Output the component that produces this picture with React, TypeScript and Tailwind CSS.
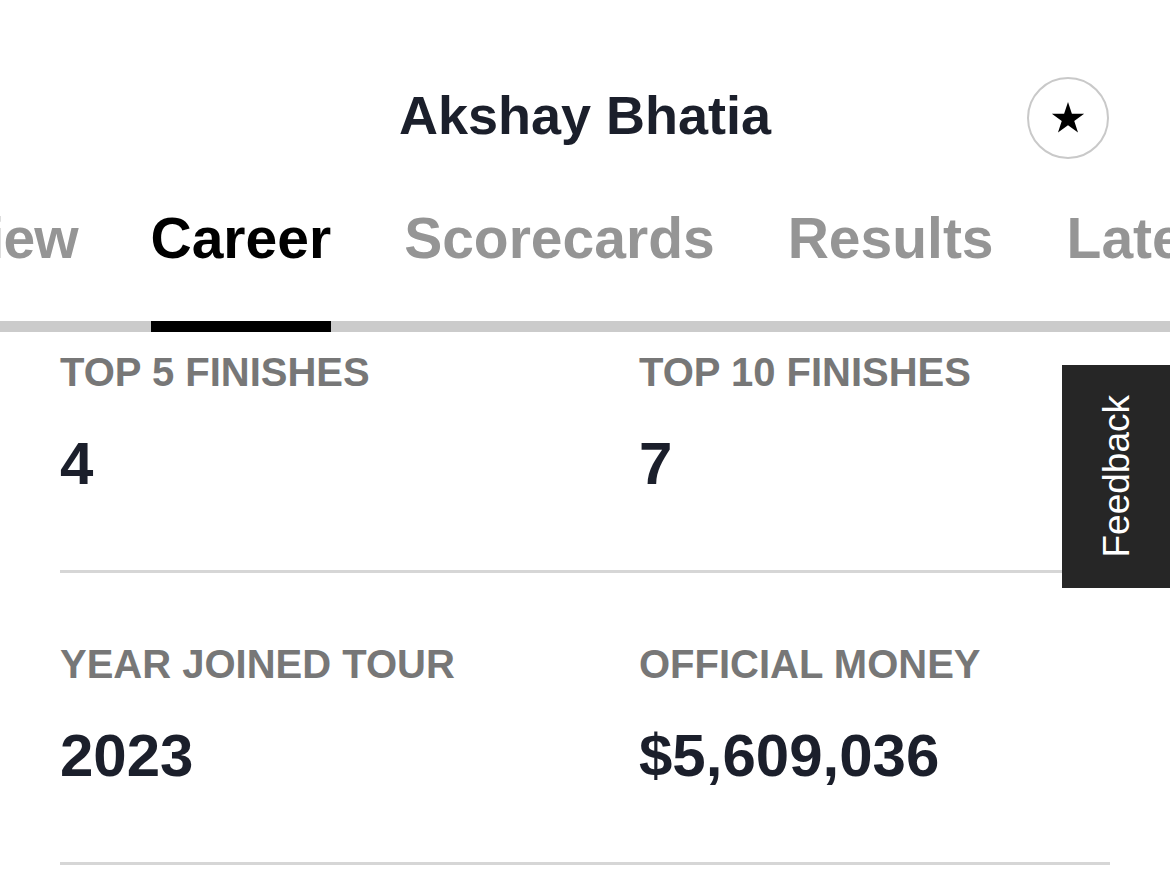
import React from "react";

const tabs = ["Overview", "Career", "Scorecards", "Results", "Latest"];

function Stat({ label, value }: { label: string; value: string }) {
  return (
    <div className="flex flex-col">
      <div className="text-[40px] leading-[48px] font-bold text-[#777777] whitespace-nowrap">
        {label}
      </div>
      <div className="mt-[32px] text-[60px] leading-[72px] font-bold text-[#1b1f2b] whitespace-nowrap">
        {value}
      </div>
    </div>
  );
}

export default function App() {
  return (
    <div
      className="relative w-[1170px] h-[873px] overflow-hidden bg-white"
      style={{ fontFamily: '"Liberation Sans", Arial, sans-serif' }}
    >
      {/* Header */}
      <div className="pt-[77px] grid grid-cols-[1fr_auto_1fr] items-center h-[159px]">
        <div />
        <h1 className="text-[54px] leading-none font-bold text-[#1b1f2b] -mt-[6px] whitespace-nowrap">
          Akshay Bhatia
        </h1>
        <div className="flex justify-end pr-[61px]">
          <button className="w-[82px] h-[82px] rounded-full border-2 border-[#c9c9c9] flex items-center justify-center bg-white">
            <svg width="34" height="32" viewBox="0 0 24 23" fill="#000">
              <polygon points="12,0 14.8,8.4 23.6,8.4 16.5,13.6 19.2,22 12,16.8 4.8,22 7.5,13.6 0.4,8.4 9.2,8.4" />
            </svg>
          </button>
        </div>
      </div>

      {/* Tabs */}
      <div className="pt-[51px] border-b-[11px] border-[#cbcbcb]">
        <div className="flex gap-[73px] ml-[-168px] whitespace-nowrap">
          {tabs.map((t, i) => {
            const active = t === "Career";
            return (
              <div key={t} className="relative pb-[54px]">
                <span
                  className={`text-[57px] leading-none font-bold ${
                    active ? "text-black" : "text-[#959595]"
                  } ${i === 0 ? "tracking-[-1px]" : ""}`}
                >
                  {t}
                </span>
                {active && (
                  <div className="absolute left-0 right-0 bottom-[-11px] h-[11px] bg-black" />
                )}
              </div>
            );
          })}
        </div>
      </div>

      {/* Stats */}
      <div className="px-[60px]">
        <div className="grid grid-cols-2 gap-x-[108px] pt-[16px] pb-[70px] border-b-[3px] border-[#d6d6d6]">
          <Stat label="TOP 5 FINISHES" value="4" />
          <Stat label="TOP 10 FINISHES" value="7" />
        </div>
        <div className="grid grid-cols-2 gap-x-[108px] pt-[67px] pb-[70px] border-b-[3px] border-[#d6d6d6]">
          <Stat label="YEAR JOINED TOUR" value="2023" />
          <Stat label="OFFICIAL MONEY" value="$5,609,036" />
        </div>
      </div>

      {/* Feedback tab */}
      <div className="absolute right-0 top-[365px] w-[108px] h-[223px] bg-[#262626] flex items-center justify-center">
        <span className="text-white text-[37px] leading-none [writing-mode:vertical-rl] rotate-180">
          Feedback
        </span>
      </div>
    </div>
  );
}
